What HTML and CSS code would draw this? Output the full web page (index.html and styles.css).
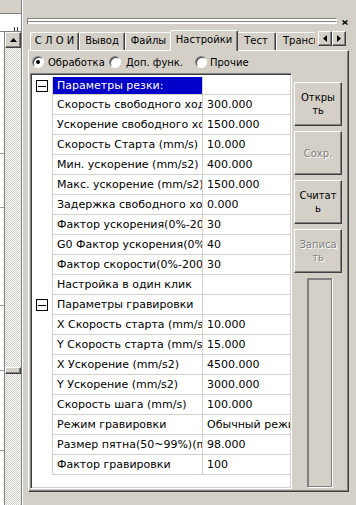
FILE: index.html
```html
<!DOCTYPE html>
<html>
<head>
<meta charset="utf-8">
<link rel="stylesheet" href="styles.css">
</head>
<body>
<div class="app">
  <div class="left">
    <div class="lt-top"></div>
    <div class="lt-ruler"><span class="tick"></span><span class="tick"></span></div>
    <div class="lt-body">
      <div class="lt-list">
        <div class="li l1"></div><div class="li l2"></div><div class="li l3"></div><div class="li l4"></div>
        <div class="li l5"></div>
      </div>
      <div class="vscroll">
        <div class="sb-btn raised"><svg width="7" height="4" viewBox="0 0 7 4"><path d="M3.5 0 L7 4 L0 4 Z" fill="#000"/></svg></div>
        <div class="sb-track">
          <div class="sb-gap"></div>
          <div class="sb-thumb raised"></div>
        </div>
      </div>
    </div>
  </div>

  <div class="pane">
    <div class="caption">
      <div class="gripper"><i></i><i></i></div>
      <svg class="close" width="6" height="5" viewBox="0 0 6 5"><path d="M0.5 0.5 L5.5 4.5 M5.5 0.5 L0.5 4.5" stroke="#000" stroke-width="1.4"/></svg>
    </div>

    <div class="tabbar">
      <div class="tabs">
        <div class="tab t1">С Л О И</div>
        <div class="tab t2">Вывод</div>
        <div class="tab t3">Файлы</div>
        <div class="tab t4 active">Настройки</div>
        <div class="tab t5">Тест</div>
        <div class="tab t6">Транспорт</div>
      </div>
      <div class="tab-arrows">
        <div class="arrow raised"><svg width="4" height="7" viewBox="0 0 4 7"><path d="M0 3.5 L4 0 L4 7 Z" fill="#000"/></svg></div>
        <div class="arrow raised"><svg width="4" height="7" viewBox="0 0 4 7"><path d="M4 3.5 L0 0 L0 7 Z" fill="#000"/></svg></div>
      </div>
    </div>

    <div class="page">
      <div class="radios">
        <label class="radio r1"><span class="dot checked"></span>Обработка</label>
        <label class="radio r2"><span class="dot"></span>Доп. функ.</label>
        <label class="radio r3"><span class="dot"></span>Прочие</label>
      </div>

      <div class="body">
        <div class="grid">
          <div class="row first"><div class="gut"><span class="minus"></span></div><div class="name sel">Параметры резки:</div><div class="val"></div></div>
          <div class="row"><div class="gut"></div><div class="name">Скорость свободного ход</div><div class="val">300.000</div></div>
          <div class="row"><div class="gut"></div><div class="name">Ускорение свободного хода</div><div class="val">1500.000</div></div>
          <div class="row"><div class="gut"></div><div class="name">Скорость Старта (mm/s)</div><div class="val">10.000</div></div>
          <div class="row"><div class="gut"></div><div class="name">Мин. ускорение (mm/s2)</div><div class="val">400.000</div></div>
          <div class="row"><div class="gut"></div><div class="name">Макс. ускорение (mm/s2)</div><div class="val">1500.000</div></div>
          <div class="row"><div class="gut"></div><div class="name">Задержка свободного хода</div><div class="val">0.000</div></div>
          <div class="row"><div class="gut"></div><div class="name">Фактор ускорения(0%-200%)</div><div class="val">30</div></div>
          <div class="row"><div class="gut"></div><div class="name">G0 Фактор ускорения(0%-200%)</div><div class="val">40</div></div>
          <div class="row"><div class="gut"></div><div class="name">Фактор скорости(0%-200%)</div><div class="val">30</div></div>
          <div class="row"><div class="gut"></div><div class="name">Настройка в один клик</div><div class="val"></div></div>
          <div class="row"><div class="gut"><span class="minus"></span></div><div class="name">Параметры гравировки</div><div class="val"></div></div>
          <div class="row"><div class="gut"></div><div class="name">X Скорость старта (mm/s)</div><div class="val">10.000</div></div>
          <div class="row"><div class="gut"></div><div class="name">Y Скорость старта (mm/s)</div><div class="val">15.000</div></div>
          <div class="row"><div class="gut"></div><div class="name">X Ускорение (mm/s2)</div><div class="val">4500.000</div></div>
          <div class="row"><div class="gut"></div><div class="name">Y Ускорение (mm/s2)</div><div class="val">3000.000</div></div>
          <div class="row"><div class="gut"></div><div class="name">Скорость шага (mm/s)</div><div class="val">100.000</div></div>
          <div class="row"><div class="gut"></div><div class="name">Режим гравировки</div><div class="val">Обычный режим</div></div>
          <div class="row"><div class="gut"></div><div class="name">Размер пятна(50~99%)(mm)</div><div class="val">98.000</div></div>
          <div class="row"><div class="gut"></div><div class="name">Фактор гравировки</div><div class="val">100</div></div>
        </div>

        <div class="side">
          <div class="btn raised">Откры<br>ть</div>
          <div class="btn raised disabled">Сохр.</div>
          <div class="btn raised">Считат<br>ь</div>
          <div class="btn raised disabled">Записа<br>ть</div>
          <div class="progress"></div>
        </div>
      </div>
    </div>
  </div>
</div>
</body>
</html>
```

FILE: styles.css
```css
* { box-sizing: border-box; margin: 0; padding: 0; }
html, body { width: 356px; height: 505px; overflow: hidden; }
body {
  background: #d4d0c8;
  font-family: "DejaVu Sans", sans-serif;
  font-size: 10px;
  color: #000;
}
.app { display: flex; width: 356px; height: 505px; }

.raised {
  background: #d4d0c8;
  border: 1px solid;
  border-color: #fff #404040 #404040 #fff;
  box-shadow: inset -1px -1px 0 #808080;
}

/* left strip */
.left {
  width: 22px; flex: none;
  display: flex; flex-direction: column;
  border-right: 1px solid #808080;
}
.lt-top { height: 14px; flex: none; border-bottom: 1px solid #808080; }
.lt-ruler {
  height: 18px; flex: none; background: #fff; border-bottom: 1px solid #808080;
  display: flex; align-items: flex-end; gap: 2px; padding-left: 14px;
}
.tick { width: 1px; height: 4px; background: #404040; }
.lt-body { flex: 1; display: flex; min-height: 0; }
.lt-list {
  width: 5px; flex: none; background: #fff; border-right: 1px solid #808080;
  padding-top: 121px; overflow: hidden;
}
.li { border-top: 1px solid #a0a0a0; }
.l1 { height: 54px; }
.l2 { height: 98px; }
.l3 { height: 65px; }
.l4 { height: 80px; }
.l5 { height: 40px; }
.vscroll { width: 16px; flex: none; display: flex; flex-direction: column; }
.sb-btn { height: 16px; flex: none; display: flex; align-items: center; justify-content: center; }
.sb-track {
  flex: 1;
  background-color: #fff;
  background-image: repeating-conic-gradient(#d4d0c8 0 25%, #fff 0 50%);
  background-size: 2px 2px;
}
.sb-gap { height: 319px; }
.sb-thumb { height: 7px; }

/* pane */
.pane {
  flex: 1;
  border-left: 1px solid #fff;
  padding: 0 7px 0 5px;
  display: flex; flex-direction: column;
}
.caption { height: 30px; flex: none; display: flex; align-items: flex-start; padding-top: 18px; }
.gripper { width: 310px; margin-left: -1px; }
.gripper i {
  display: block; height: 3px; background: #fff;
  border-top: 1px solid #808080; border-left: 1px solid #808080;
  border-right: 1px solid #fff;
}
.close { margin-left: 5px; margin-top: 2px; }

.tabbar { position: relative; height: 20px; flex: none; }
.tabs {
  display: flex; align-items: flex-end;
  height: 21px; margin-left: 2px; width: 285px;
  overflow: hidden; position: relative; z-index: 1;
}
.tab {
  flex: none;
  height: 18px; margin-bottom: 1px;
  border-top: 1px solid #fff; border-left: 1px solid #fff;
  border-right: 1px solid #404040;
  box-shadow: inset -1px 0 0 #808080;
  border-radius: 2px 2px 0 0;
  text-align: center; line-height: 16px;
  white-space: nowrap; overflow: hidden;
}
.t1 { width: 49px; }
.t2 { width: 46px; }
.t3 { width: 47px; }
.t4 { width: 68px; }
.t5 { width: 40px; }
.t6 { width: 60px; text-align: left; padding-left: 6px; }
.tab.active {
  height: 21px; margin: 0 -2px; background: #d4d0c8;
  position: relative; z-index: 2; line-height: 17px;
}
.tab-arrows { position: absolute; left: 290px; top: 1px; display: flex; z-index: 3; }
.arrow { width: 14px; height: 15px; display: flex; align-items: center; justify-content: center; }

.page {
  width: 321px; height: 442px; flex: none;
  border: 1px solid;
  border-color: #fff #404040 #404040 #fff;
  box-shadow: inset -1px -1px 0 #808080;
  display: flex; flex-direction: column;
}
.radios { height: 22px; flex: none; display: flex; align-items: center; padding-left: 3px; }
.radio { display: flex; align-items: center; gap: 4px; white-space: nowrap; }
.r1 { width: 77px; }
.r2 { width: 86px; gap: 5px; }
.r3 { gap: 3px; }
.dot {
  width: 12px; height: 12px; border-radius: 50%;
  background: #fff; border: 1px solid;
  border-color: #808080 #fff #fff #808080;
  box-shadow: inset 1px 1px 0 #404040;
  display: flex; align-items: center; justify-content: center;
}
.dot.checked::after { content: ""; width: 4px; height: 4px; border-radius: 50%; background: #000; }

.body { display: flex; align-items: flex-start; }
.grid {
  margin-left: 1px;
  width: 262px; height: 416px;
  background: #fff;
  border: 1px solid;
  border-color: #808080 #fff #fff #808080;
  box-shadow: inset 1px 1px 0 #404040, inset -1px -1px 0 #d4d0c8;
  padding: 3px 1px 1px 1px;
  font-size: 11px;
}
.row { display: flex; height: 20px; }
.row.first { height: 18px; }
.gut { width: 20px; flex: none; display: flex; align-items: center; padding-left: 4px; }
.name, .val {
  border-left: 1px solid #d4d0c8; border-bottom: 1px solid #d4d0c8;
  white-space: nowrap; overflow: hidden;
  display: flex; align-items: center; padding-left: 4px;
}
.name { width: 150px; flex: none; }
.val { width: 88px; flex: none; }
.name.sel { background: #0000c8; color: #fff; }
.minus {
  width: 12px; height: 12px; border: 1px solid #000; background: #fff;
  display: flex; align-items: center; justify-content: center;
}
.minus::after { content: ""; width: 8px; height: 1px; background: #000; }

.side { margin-left: 2px; width: 48px; padding-top: 9px; display: flex; flex-direction: column; gap: 5px; }
.btn {
  height: 44px; display: flex; align-items: center; justify-content: center;
  text-align: center; line-height: 13px;
}
.btn.disabled { color: #808080; text-shadow: 1px 1px 0 #fff; }
.progress {
  margin-left: 13px; width: 26px; height: 210px;
  border: 1px solid; border-color: #808080 #fff #fff #808080;
  box-shadow: inset 1px 1px 0 #808080, inset -1px -1px 0 #808080;
}
```
